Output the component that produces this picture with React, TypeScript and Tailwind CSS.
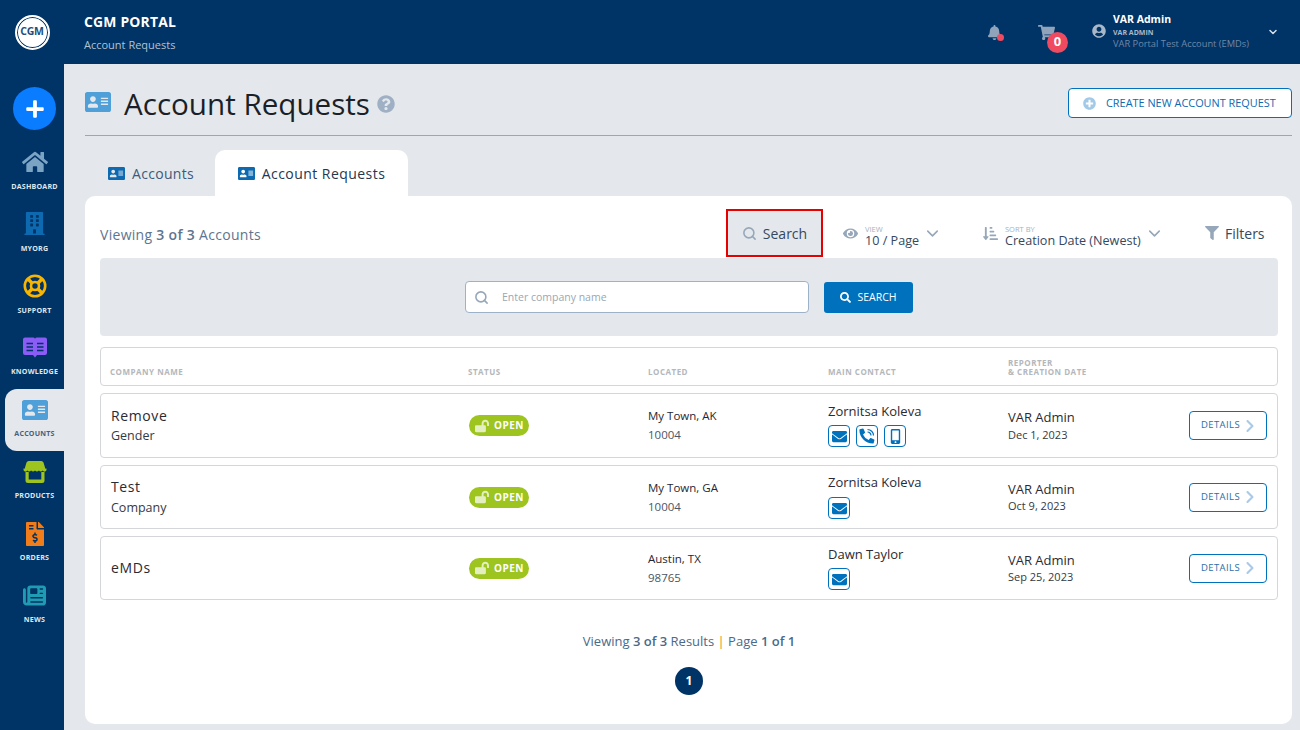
import type { ReactNode } from "react";
import {
  FaAddressCard,
  FaBell,
  FaBuilding,
  FaEnvelope,
  FaEye,
  FaFileInvoiceDollar,
  FaFilter,
  FaHome,
  FaMobileAlt,
  FaPlus,
  FaPlusCircle,
  FaQuestionCircle,
  FaSearch,
  FaShoppingCart,
  FaSortAmountDownAlt,
  FaLockOpen,
  FaUserCircle,
} from "react-icons/fa";
import { FaNewspaper } from "react-icons/fa6";
import { FiChevronDown, FiChevronRight, FiSearch } from "react-icons/fi";

function StoreIcon() {
  return (
    <svg width="24" height="24" viewBox="0 0 24 24" fill="#9dc41f">
      <path d="M2 10h20v-2.500l-1.500-5a2.500 2.500 0 0 0-2.400-1.500H5.900a2.500 2.500 0 0 0-2.400 1.500L2 7.500z" />
      <path d="M.5 8.500h23v1.200a2 2 0 0 1-3.800.8 2.800 2.800 0 0 1-3.800 0 2.800 2.800 0 0 1-3.900 0 2.800 2.800 0 0 1-3.900 0 2.800 2.800 0 0 1-3.800 0 2 2 0 0 1-3.800-.8z" />
      <path d="M2.500 12h3.200v7.500h12.600V12h3.200v8.500a2.500 2.500 0 0 1-2.500 2.500h-14a2.500 2.500 0 0 1-2.500-2.500z" />
    </svg>
  );
}

function SupportIcon() {
  return (
    <svg width="24" height="24" viewBox="0 0 24 24" fill="none" stroke="#f7b500" strokeWidth="2.600">
      <circle cx="12" cy="12" r="10.200" />
      <circle cx="12" cy="12" r="4" />
      <path d="M5 5l4 4M19 5l-4 4M5 19l4-4M19 19l-4-4" strokeWidth="3.400" />
    </svg>
  );
}

function KnowledgeIcon() {
  return (
    <svg width="26" height="23" viewBox="0 0 26 23">
      <path
        d="M1 3.500q0-2 2-2h8q1.500 0 2 1.200q.5-1.200 2-1.200h8q2 0 2 2v13.500q0 2-2 2h-8l-2 2.500l-2-2.500h-8q-2 0-2-2z"
        fill="#8b5cf6"
      />
      <path d="M4.500 7.500h6.500M4.500 11h6.500M4.500 14.500h6.500M15 7.500h6.500M15 11h6.500M15 14.500h6.500" stroke="#003366" strokeWidth="1.500" />
    </svg>
  );
}

function PhoneIcon() {
  return (
    <svg width="16" height="16" viewBox="0 0 16 16" fill="currentColor">
      <path d="M15.100 11.500l-3.200-1.400a.7.7 0 0 0-.8.2l-1.400 1.800A10.800 10.800 0 0 1 4 6.400l1.800-1.400a.7.7 0 0 0 .2-.8L4.600 1a.7.7 0 0 0-.8-.4L.9 1.300A.7.7 0 0 0 .4 2c0 7.500 6.100 13.600 13.600 13.600a.7.7 0 0 0 .7-.5l.7-2.900a.7.7 0 0 0-.3-.7z" />
      <path d="M8.500 1.500a6 6 0 0 1 6 6M8.500 4a3.500 3.500 0 0 1 3.500 3.500" fill="none" stroke="currentColor" strokeWidth="1.200" />
    </svg>
  );
}

const NAV: { label: string; icon: ReactNode; active?: boolean }[] = [
  { label: "DASHBOARD", icon: <FaHome size={26} className="text-[#7ba3c4]" /> },
  { label: "MYORG", icon: <FaBuilding size={23} className="text-[#0d6ab0]" /> },
  { label: "SUPPORT", icon: <SupportIcon /> },
  { label: "KNOWLEDGE", icon: <KnowledgeIcon /> },
  { label: "ACCOUNTS", icon: <FaAddressCard size={26} className="text-[#4f9fd8]" />, active: true },
  { label: "PRODUCTS", icon: <StoreIcon /> },
  { label: "ORDERS", icon: <FaFileInvoiceDollar size={24} className="text-[#f07d1a]" /> },
  { label: "NEWS", icon: <FaNewspaper size={23} className="text-[#1f9bb3]" /> },
];

const ROWS = [
  {
    name: "Remove",
    sub: "Gender",
    city: "My Town, AK",
    zip: "10004",
    first: "Zornitsa",
    last: "Koleva",
    phones: true,
    date: "Dec 1, 2023",
    tall: true,
    contactTop: "pt-[8px]",
    buttonsTop: "mt-[5px]",
  },
  {
    name: "Test",
    sub: "Company",
    city: "My Town, GA",
    zip: "10004",
    first: "Zornitsa",
    last: "Koleva",
    phones: false,
    date: "Oct 9, 2023",
    tall: false,
    contactTop: "pt-[7px]",
    buttonsTop: "mt-[6px]",
  },
  {
    name: "eMDs",
    sub: "",
    city: "Austin, TX",
    zip: "98765",
    first: "Dawn",
    last: "Taylor",
    phones: false,
    date: "Sep 25, 2023",
    tall: false,
    contactTop: "pt-[8px]",
    buttonsTop: "mt-[5px]",
  },
];

function ContactButton({ children }: { children: ReactNode }) {
  return (
    <span className="flex h-[22px] w-[22px] items-center justify-center rounded-[4px] border border-[#0071bc] text-[#0071bc]">
      {children}
    </span>
  );
}

function Row({ row }: { row: (typeof ROWS)[number] }) {
  return (
    <div
      className={`grid grid-cols-[359px_179px_180px_180px_1fr] items-center rounded-[4px] border border-[#d4d6d9] pl-[9px] ${
        row.tall ? "h-[65px]" : "h-[64px]"
      }`}
    >
      <div className={`ml-[1px] ${row.tall ? "" : "mt-[-1px]"}`}>
        <div className="text-[14px] leading-[20px] font-medium tracking-[0.6px] text-[#2a2a33]">{row.name}</div>
        {row.sub && <div className={`text-[12.500px] leading-[18px] text-[#333a44] ${row.tall ? "mt-[1px]" : "mt-[2px]"}`}>{row.sub}</div>}
      </div>
      <div className="pt-[2px]">
        <span className="inline-flex h-[21px] w-[60px] items-center gap-[5px] rounded-full bg-[#9dc41f] pl-[6px] text-[10px] font-bold tracking-[0.5px] text-white">
          <FaLockOpen size={14} className="text-[#e4efc0]" />
          OPEN
        </span>
      </div>
      <div>
        <div className="text-[11.500px] leading-[18px] font-medium text-[#1f2733]">{row.city}</div>
        <div className="mt-[1px] text-[11.500px] leading-[18px] text-[#4b5563]">{row.zip}</div>
      </div>
      <div className={`self-start ${row.contactTop}`}>
        <div className="text-[13px] leading-[18px] text-[#2a2a33]">
          {row.first} <span className="font-medium">{row.last}</span>
        </div>
        <div className={`flex gap-[6px] ${row.buttonsTop}`}>
          <ContactButton>
            <FaEnvelope size={15} />
          </ContactButton>
          {row.phones && (
            <>
              <ContactButton>
                <PhoneIcon />
              </ContactButton>
              <ContactButton>
                <FaMobileAlt size={15} />
              </ContactButton>
            </>
          )}
        </div>
      </div>
      <div className="flex items-center justify-between pr-[10px]">
        <div>
          <div className={`text-[13px] font-medium text-[#2a2a33] ${row.tall ? "mt-[-1px] mb-[1px] leading-[18px]" : "mt-[1px] leading-[17px]"}`}>
            VAR Admin
          </div>
          <div className="text-[11px] leading-[16px] text-[#333a44]">{row.date}</div>
        </div>
        <span className="flex h-[29px] w-[78px] items-center justify-between rounded-[4px] border border-[#0071bc] pr-[6px] pl-[11px] text-[9.500px] font-medium tracking-[0.4px] text-[#2b6ea8]">
          DETAILS
          <FiChevronRight size={20} strokeWidth={2.500} className="text-[#a9c9e6]" />
        </span>
      </div>
    </div>
  );
}

export default function App() {
  return (
    <div className="flex h-[730px] w-[1300px] flex-col overflow-hidden bg-[#e4e8ed] font-['Open_Sans',sans-serif]">
      <header className="flex h-[64px] shrink-0 items-center bg-[#003366] text-white">
        <div className="flex w-[64px] shrink-0 justify-center">
          <div className="flex h-[35px] w-[35px] items-center justify-center rounded-full border-[2px] border-white bg-white shadow-[inset_0_0_0_1px_#003366]">
            <span className="text-[10.500px] font-bold tracking-[-0.3px] text-[#1f4e7c]">CGM</span>
          </div>
        </div>
        <div className="ml-[20px]">
          <div className="text-[13.900px] leading-[20px] font-bold tracking-[0.2px]">CGM PORTAL</div>
          <div className="mt-[6px] text-[11px] leading-[14px] text-[#b3c2d3]">Account Requests</div>
        </div>
        <div className="ml-auto flex items-center">
          <span className="relative mr-[36px] text-[#8fa3bb]">
            <FaBell size={15} />
            <span className="absolute top-[9px] left-[10px] h-[7px] w-[7px] rounded-full bg-[#ef4a5f]" />
          </span>
          <span className="relative mr-[37px] text-[#8fa3bb]">
            <FaShoppingCart size={17} />
            <span className="absolute top-[8px] left-[9px] flex h-[21px] w-[21px] items-center justify-center rounded-full bg-[#ef4a5f] text-[13px] font-bold text-white">
              0
            </span>
          </span>
          <FaUserCircle size={14} className="mr-[7px] mb-[3px] text-[#a9b8c9]" />
          <div className="mb-[2px] w-[154px]">
            <div className="mb-[2px] text-[10.500px] leading-[14px] font-bold">VAR Admin</div>
            <div className="text-[7px] leading-[10px] font-bold text-[#a9b8c9]">VAR ADMIN</div>
            <div className="text-[9.300px] leading-[12px] whitespace-nowrap text-[#6f88a6]">VAR Portal Test Account (EMDs)</div>
          </div>
          <FiChevronDown size={12} strokeWidth={3} className="mr-[21px] text-[#d8e0e9]" />
        </div>
      </header>

      <div className="flex min-h-0 flex-1">
        <nav className="flex w-[64px] shrink-0 flex-col bg-[#003366] pt-[23px]">
          <div className="mb-[11px] ml-[13px] flex h-[43px] w-[43px] items-center justify-center rounded-full bg-[#0a7cff] text-white">
            <FaPlus size={20} />
          </div>
          {NAV.map((item, i) => (
            <div
              key={item.label}
              className={`ml-[5px] flex h-[62px] flex-col items-center justify-start rounded-l-[12px] pt-[7px] ${
                item.active ? "bg-[#e4e8ed] text-[#4a6078]" : "text-[#dfe7ef]"
              }`}
            >
              <div className="flex h-[27px] items-center">{item.icon}</div>
              <div className={`text-[7.100px] leading-[12px] font-bold tracking-[0.2px] ${i >= 3 ? "mt-[4px]" : "mt-[5px]"}`}>{item.label}</div>
            </div>
          ))}
        </nav>

        <main className="flex min-w-0 flex-1 flex-col pr-[8px] pl-[21px]">
          <div className="flex h-[72px] shrink-0 items-center border-b border-[#9aa7b5] pt-[10px]">
            <FaAddressCard size={26} className="mb-[6px] text-[#4f9fd8]" />
            <h1 className="mb-[2px] ml-[13px] text-[29.600px] leading-[40px] font-medium text-[#1b1f27]">Account Requests</h1>
            <FaQuestionCircle size={18} className="mb-[2px] ml-[7px] text-[#9fb0c4]" />
            <button className="mb-[3px] ml-auto flex h-[30px] w-[224px] items-center rounded-[4px] border border-[#0071bc] bg-white pl-[14px] text-[10.900px] font-medium text-[#0d6ab0]">
              <FaPlusCircle size={13} className="mr-[10px] text-[#a3c9e8]" />
              CREATE NEW ACCOUNT REQUEST
            </button>
          </div>

          <div className="mt-[14px] flex h-[46px] shrink-0">
            <div className="flex w-[130px] items-center justify-center gap-[7px] pl-[2px] text-[14px] tracking-[0.3px] text-[#3c5a7a]">
              <FaAddressCard size={17} className="text-[#0d6ab0]" />
              Accounts
            </div>
            <div className="flex w-[193px] items-center justify-center gap-[7px] rounded-t-[10px] bg-white text-[14px] font-medium tracking-[0.45px] text-[#23384f]">
              <FaAddressCard size={17} className="text-[#0d6ab0]" />
              Account Requests
            </div>
          </div>

          <section className="flex h-[528px] shrink-0 flex-col rounded-[10px] bg-white pr-[14px] pl-[15px]">
            <div className="mt-[13px] flex h-[48px] shrink-0 items-center text-[#34495e]">
              <div className="w-[626px] pt-[2px] text-[14px] tracking-[0.3px] text-[#5d7590]">
                Viewing <span className="font-semibold">3 of 3</span> Accounts
              </div>
              <div className="flex h-[48px] w-[97px] items-center justify-center gap-[6px] border-[2px] border-[#e60000] bg-[#e4e8ed] text-[14px]">
                <FiSearch size={15} strokeWidth={2.500} className="text-[#96a7b9]" />
                Search
              </div>
              <div className="ml-[20px] flex w-[121px] items-center">
                <FaEye size={15} className="mr-[7px] text-[#96a7b9]" />
                <div className="pt-[7px]">
                  <div className="text-[7.500px] leading-[8px] text-[#a5b2c0]">VIEW</div>
                  <div className="text-[12.600px] leading-[15px] whitespace-nowrap">10 / Page</div>
                </div>
                <FiChevronDown size={19} className="ml-[4px] text-[#96a7b9]" />
              </div>
              <div className="ml-[19px] flex w-[222px] items-center">
                <FaSortAmountDownAlt size={15} className="mr-[7px] text-[#96a7b9]" />
                <div className="pt-[7px]">
                  <div className="text-[7.500px] leading-[8px] text-[#a5b2c0]">SORT BY</div>
                  <div className="text-[12.600px] leading-[15px] whitespace-nowrap">Creation Date (Newest)</div>
                </div>
                <FiChevronDown size={19} className="ml-[4px] text-[#96a7b9]" />
              </div>
              <div className="flex items-center gap-[6px] text-[14px]">
                <FaFilter size={14} className="text-[#96a7b9]" />
                Filters
              </div>
            </div>

            <div className="mt-[1px] flex h-[78px] shrink-0 items-center justify-center rounded-[4px] bg-[#e4e8ed]">
              <div className="flex h-[32px] w-[344px] items-center rounded-[4px] border border-[#9db2c8] bg-white pl-[8px] text-[10.500px] text-[#9aa7b5]">
                <FiSearch size={15} strokeWidth={2.500} className="mr-[13px] text-[#96a7b9]" />
                <span className="pt-[1px]">Enter company name</span>
              </div>
              <div className="ml-[15px] flex h-[31px] w-[89px] items-center justify-center gap-[6px] rounded-[3px] bg-[#0071bc] text-[10.500px] font-medium text-white">
                <FaSearch size={11} />
                <span className="pt-[1px]">SEARCH</span>
              </div>
            </div>

            <div className="mt-[11px] grid h-[39px] shrink-0 grid-cols-[358px_180px_180px_180px_1fr] items-end rounded-[4px] border border-[#d4d6d9] pb-[9px] pl-[9px] text-[8px] leading-[9px] font-bold tracking-[0.5px] text-[#b4b7bb]">
              <div>COMPANY NAME</div>
              <div>STATUS</div>
              <div>LOCATED</div>
              <div>MAIN CONTACT</div>
              <div>
                REPORTER
                <br />& CREATION DATE
              </div>
            </div>

            <div className="mt-[7px] flex flex-col gap-[7px]">
              {ROWS.map((row) => (
                <Row key={row.name} row={row} />
              ))}
            </div>

            <div className="mt-[31px] text-center text-[13px] leading-[20px] text-[#4a6a8a]">
              Viewing <span className="font-semibold">3 of 3</span> Results <span className="text-[#e08a1e]">|</span> Page{" "}
              <span className="font-semibold">1 of 1</span>
            </div>
            <div className="mt-[16px] flex justify-center">
              <span className="flex h-[28px] w-[28px] items-center justify-center rounded-full bg-[#003366] text-[12px] font-bold text-white">
                1
              </span>
            </div>
          </section>
        </main>
      </div>
    </div>
  );
}
